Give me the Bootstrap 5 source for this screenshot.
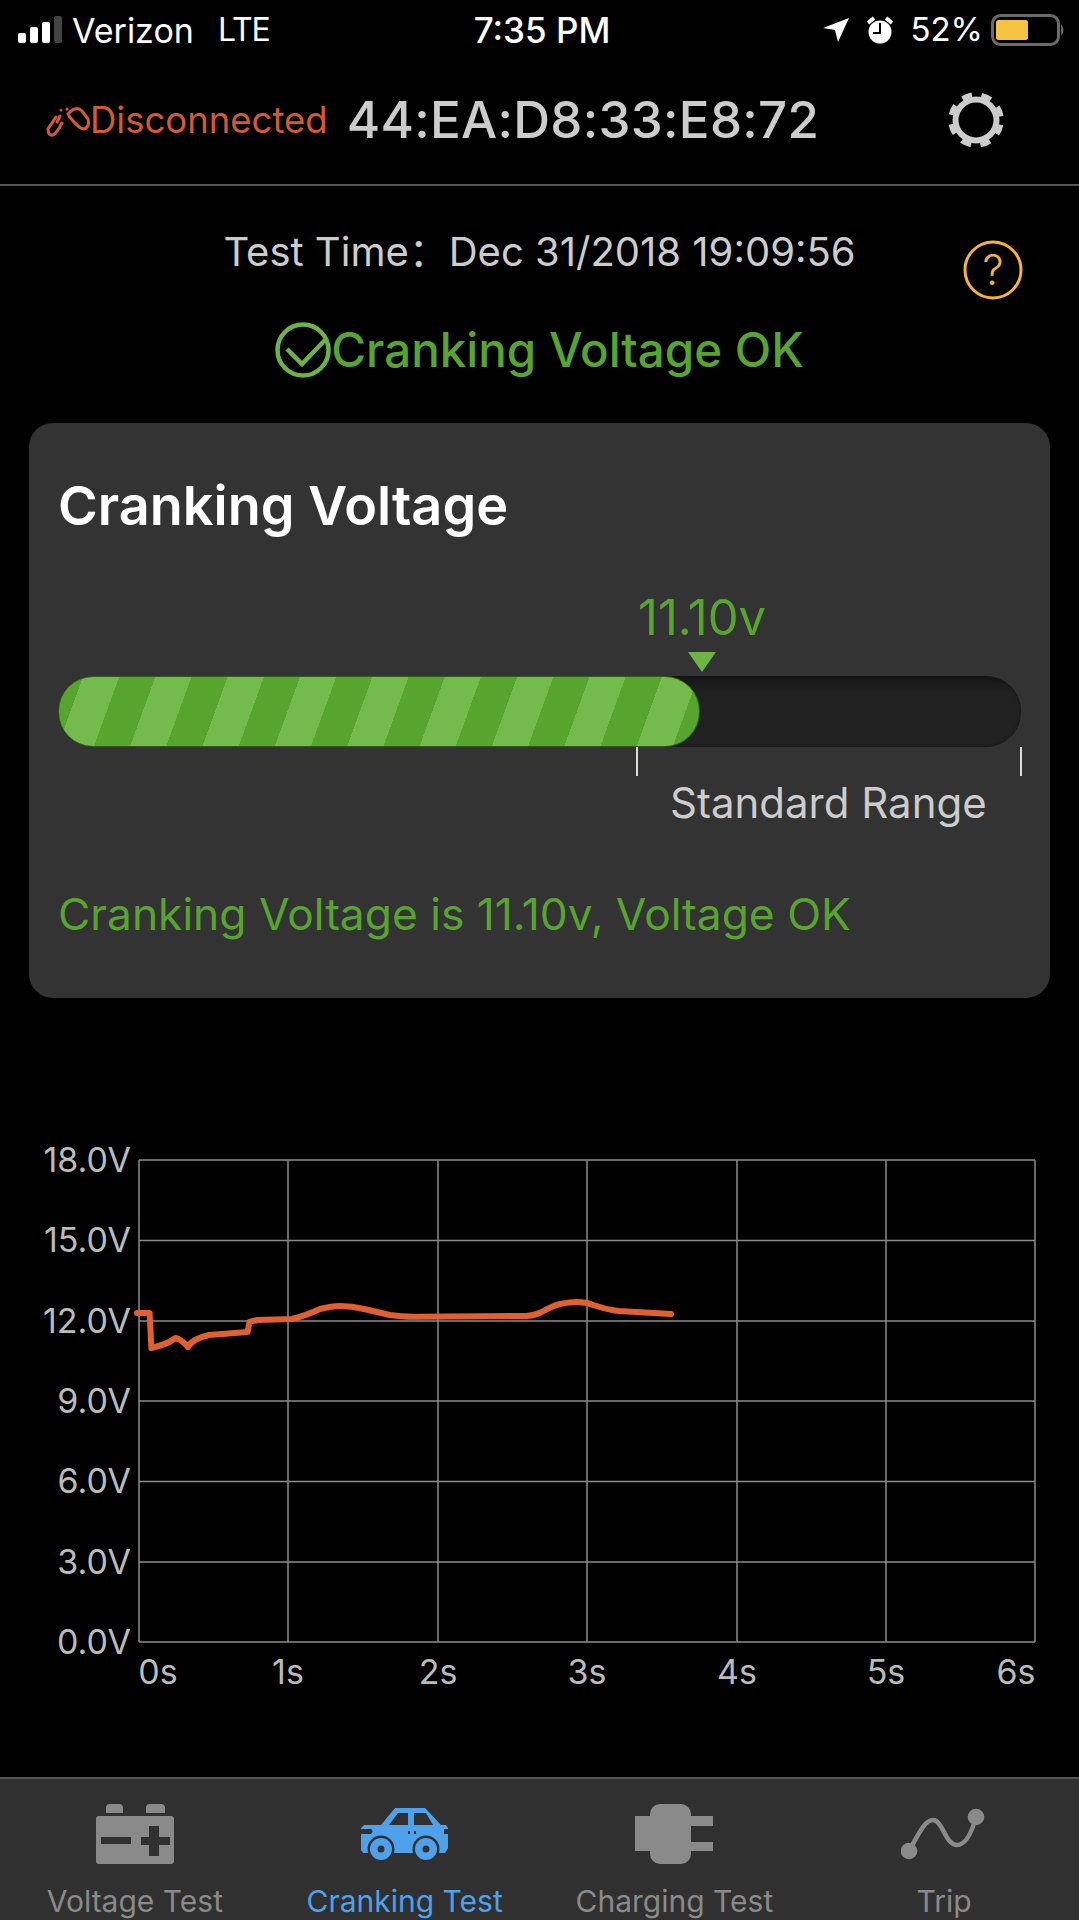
<!DOCTYPE html>
<html lang="en">
<head>
  <meta charset="UTF-8" />
  <title>Cranking Test</title>
  <link href="https://cdn.jsdelivr.net/npm/bootstrap@5.3.3/dist/css/bootstrap.min.css" rel="stylesheet" />
  <style>
    html, body { height: 100%; }
    body { background: #000; font-family: Inter, Roboto, "Noto Sans CJK SC", "Liberation Sans", sans-serif; overflow: hidden; }
    .phone { width: 1079px; height: 1920px; }
    .status-bar { height: 60px; padding: 0 13px 0 18px; color: #fff; font-size: 34px; }
    .status-side { flex: 1 1 0; }
    .status-lte { font-size: 32px; letter-spacing: -1px; }
    .status-time { font-weight: 500; font-size: 35px; }
    .status-pct { font-size: 33px; }
    .conn-bar { height: 126px; padding: 0 0 4px 46px; border-bottom: 2px solid #555; }
    .conn-text { color: #d35a33; font-size: 36.500px; }
    .mac-text { color: #ccc; font-size: 51px; font-weight: 500; margin-left: 19px; letter-spacing: .3px; }
    .gear-icon { margin-left: auto; margin-right: 73px; }
    .test-row { padding: 0 56px; margin-top: 42px; }
    .help-spot { width: 60px; margin-top: 12px; }
    .test-time { color: #ccc; font-size: 40px; line-height: 48px; white-space: nowrap; }
    .result-line { color: #57a42e; font-size: 47.500px; font-weight: 500; height: 60px; margin-top: 20px; }
    .volt-card { background: #333; border-radius: 24px; margin: 43px 29px 0; height: 575px; padding: 0 29px; }
    .volt-title { color: #fff; font-size: 54px; font-weight: 600; padding-top: 50px; line-height: 66px; margin: 0; }
    .volt-value { color: #57a42e; font-size: 49px; line-height: 50px; margin-top: 54px; padding-left: 580px; width: 860px; white-space: nowrap; }
    .volt-arrow { width: 0; height: 0; border-left: 14px solid transparent; border-right: 14px solid transparent; border-top: 20px solid #6cb543; margin: 9px 0 4px 630px; }
    .volt-track { height: 71px; border-radius: 35px; background: linear-gradient(#161616, #212121 25%); box-shadow: inset 0 0 3px #111; }
    .volt-fill { width: 66.7%; height: 100%; border-radius: 35px; border: 1px solid #2f5f18; background: repeating-linear-gradient(110deg, #57a42e 0 22.500px, #74ba4c 22.500px 56.500px, #57a42e 56.500px 68px); }
    .range-ticks { height: 29px; margin-left: 578px; border-left: 2px solid #ddd; border-right: 2px solid #ddd; margin-right: -1px; }
    .range-label { color: #ccc; font-size: 42px; line-height: 54px; margin-left: 612px; white-space: nowrap; }
    .volt-note { color: #57a42e; font-size: 44.300px; line-height: 50px; margin-top: 59px; white-space: nowrap; }
    .chart-svg { display: block; flex: none; }
    .chart-svg text { fill: #bbb; font-size: 34px; font-family: Inter, Roboto, sans-serif; }
    .tab-bar { background: #303030; height: 143px; border-top: 2px solid #555; }
    .tab-item { color: #8a8a8a; font-size: 30px; line-height: 36px; }
    .tab-item.active-tab { color: #4ea1ea; }
    .tab-pic { height: 104px; padding-top: 25px; }
  </style>
</head>
<body>
<div class="phone d-flex flex-column">

  <div class="status-bar d-flex align-items-center">
    <div class="status-side d-flex align-items-center">
      <svg width="46" height="28" viewBox="0 0 46 28" class="me-2"><g fill="#fff"><rect x="0" y="17" width="8" height="10" rx="2"/><rect x="12" y="11" width="8" height="16" rx="2"/><rect x="24" y="6" width="8" height="21" rx="2"/></g><rect x="36" y="0" width="8" height="27" rx="2" fill="#444"/></svg>
      <span>Verizon</span><span class="status-lte ms-4">LTE</span>
    </div>
    <div class="status-time">7:35 PM</div>
    <div class="status-side d-flex align-items-center justify-content-end">
      <svg width="27" height="26" viewBox="0 0 27 26" class="me-3"><path d="M26 1 L0 11 L12 13 L15 25 Z" fill="#fff"/></svg>
      <svg width="28" height="30" viewBox="0 0 28 30" class="me-3"><circle cx="14" cy="17" r="11.500" fill="#fff"/><path d="M14 8v10h-7" fill="none" stroke="#000" stroke-width="2"/><path d="M2 8 L8 3 M26 8 L20 3" stroke="#fff" stroke-width="4"/></svg>
      <span class="status-pct">52%</span>
      <svg width="75" height="32" viewBox="0 0 75 32" class="ms-2"><rect x="1.500" y="1.500" width="66" height="29" rx="8" fill="none" stroke="#6a6a6a" stroke-width="3"/><rect x="5" y="6" width="32" height="20" rx="2.500" fill="#f5c242"/><path d="M70 10 q5 6 0 12z" fill="#6a6a6a"/></svg>
    </div>
  </div>

  <div class="conn-bar d-flex align-items-center">
    <svg width="44" height="34" viewBox="0 0 44 34"><g fill="none" stroke="#d35a33" stroke-width="3" stroke-linecap="round"><path d="M10 14 L2 26 Q2 33 7 32 Q11 30 16 20"/><path d="M22 11 Q30 2 36 8 L42 16 Q44 24 38 26 Q33 26 23 13"/><path d="M15 7v.1M21 6v.1M14 13l-3 6"/></g></svg>
    <span class="conn-text">Disconnected</span>
    <span class="mac-text">44:EA:D8:33:E8:72</span>
    <svg class="gear-icon" width="60" height="60" viewBox="0 0 60 60"><circle cx="30" cy="30" r="20.500" fill="none" stroke="#ccc" stroke-width="6"/><circle cx="30" cy="30" r="25" fill="none" stroke="#ccc" stroke-width="5.500" stroke-dasharray="10 9.635" stroke-dashoffset="-4.800"/></svg>
  </div>

  <div class="test-row d-flex align-items-start">
    <div class="help-spot"></div>
    <div class="test-time flex-grow-1 text-center">Test Time：Dec 31/2018 19:09:56</div>
    <div class="help-spot">
      <svg width="60" height="60" viewBox="0 0 60 60"><circle cx="30" cy="30" r="28" fill="none" stroke="#f3b33e" stroke-width="3"/><text x="30" y="45" text-anchor="middle" fill="#f3b33e" font-size="42" font-weight="300" font-family="Inter, sans-serif">?</text></svg>
    </div>
  </div>

  <div class="result-line d-flex align-items-center justify-content-center">
    <svg width="56" height="56" viewBox="0 0 56 56"><circle cx="28" cy="28" r="25.500" fill="none" stroke="#6cb543" stroke-width="4.500"/><path d="M12 27 L27 42 L50 18" fill="none" stroke="#6cb543" stroke-width="4.500"/></svg>
    <span>Cranking Voltage OK</span>
  </div>

  <div class="volt-card">
    <h2 class="volt-title">Cranking Voltage</h2>
    <div class="volt-value">11.10v</div>
    <div class="volt-arrow"></div>
    <div class="volt-track"><div class="volt-fill"></div></div>
    <div class="range-ticks"></div>
    <div class="range-label">Standard Range</div>
    <div class="volt-note">Cranking Voltage is 11.10v, Voltage OK</div>
  </div>

  <svg class="chart-svg" width="1079" height="779" viewBox="0 998 1079 779">
    <g stroke="#8a8a8a" stroke-width="1.500" fill="none">
      <path d="M139 1160H1035M139 1240.500H1035M139 1321H1035M139 1401H1035M139 1481.500H1035M139 1562H1035M139 1642H1035"/>
      <path d="M139 1160V1642M288 1160V1642M438 1160V1642M587 1160V1642M737 1160V1642M886 1160V1642M1035 1160V1642"/>
    </g>
    <g text-anchor="end">
      <text x="131" y="1172">18.0V</text><text x="131" y="1252">15.0V</text><text x="131" y="1333">12.0V</text><text x="131" y="1413">9.0V</text><text x="131" y="1493">6.0V</text><text x="131" y="1574">3.0V</text><text x="131" y="1654">0.0V</text>
    </g>
    <g text-anchor="middle">
      <text x="158" y="1684">0s</text><text x="288" y="1684">1s</text><text x="438" y="1684">2s</text><text x="587" y="1684">3s</text><text x="737" y="1684">4s</text><text x="886" y="1684">5s</text><text x="1016" y="1684">6s</text>
    </g>
    <path d="M137 1313 L149.600 1313 L151.400 1348 L162 1345 Q169 1343 175.500 1338 Q181 1339 188 1347 Q192 1339 209 1335 L247.600 1332 L249.500 1322 L257 1320 L292 1319 Q305 1316 320 1309 Q332 1306 340 1306 Q352 1306 364 1309 L390 1315 Q405 1317 416 1316.700 L527 1316 Q536 1315 541.700 1312 Q552 1306 560 1304 Q570 1302 577 1302 Q586 1302 593.500 1305 Q608 1310 619 1311 L671 1314" fill="none" stroke="#e0602f" stroke-width="6" stroke-linejoin="round" stroke-linecap="round"/>
  </svg>

  <div class="tab-bar row g-0 text-center">
    <div class="col-3 tab-item">
      <div class="tab-pic"><svg width="78" height="60" viewBox="0 0 78 60"><path d="M10 4a4 4 0 0 1 4-4h9a4 4 0 0 1 4 4v5H10zM50 4a4 4 0 0 1 4-4h11a4 4 0 0 1 4 4v5H50z" fill="#8a8a8a"/><path d="M0 15a3 3 0 0 1 3-3h72a3 3 0 0 1 3 3v42a3 3 0 0 1-3 3H3a3 3 0 0 1-3-3z" fill="#8a8a8a"/><path d="M5 33h30v7H5zM45 33h8V22h10v11h11v8H63v11H53V41H45z" fill="#303030"/></svg></div>
      <div>Voltage Test</div>
    </div>
    <div class="col-3 tab-item active-tab">
      <div class="tab-pic"><svg width="87" height="62" viewBox="0 -4 87 62">
        <path fill="#4ea1ea" fill-rule="evenodd" d="M34 0H64L80 17H85L87 20V40L84 45H2L0 42V20L3 17H20ZM37 5 L28 17H47V5ZM53 5V17H72L65 5Z"/>
        <path d="M0 21H10Q13 23 10 26H0ZM83 21H87V26H83Z" fill="#303030"/>
        <path d="M47 23h2v3h-2zM53 23h2v3h-2z" fill="#303030"/>
        <circle cx="20" cy="41" r="13.500" fill="#303030"/><circle cx="65" cy="41" r="13.500" fill="#303030"/>
        <circle cx="20" cy="41" r="11" fill="#4ea1ea"/><circle cx="65" cy="41" r="11" fill="#4ea1ea"/>
        <circle cx="20" cy="41" r="3.500" fill="#303030"/><circle cx="65" cy="41" r="3.500" fill="#303030"/>
      </svg></div>
      <div>Cranking Test</div>
    </div>
    <div class="col-3 tab-item">
      <div class="tab-pic"><svg width="78" height="60" viewBox="0 0 78 60"><path fill="#8a8a8a" d="M15 12V10A10 10 0 0 1 25 0H46A10 10 0 0 1 56 10V12H78V22H56V38H78V47H56V50A10 10 0 0 1 46 60H25A10 10 0 0 1 15 50V47H0V12Z"/></svg></div>
      <div>Charging Test</div>
    </div>
    <div class="col-3 tab-item">
      <div class="tab-pic"><svg width="86" height="62" viewBox="0 -4 86 62"><path d="M8 43 C18 25 24 12 32 12 C42 12 44 37 56 37 C66 37 72 20 75 9" fill="none" stroke="#8a8a8a" stroke-width="4.500"/><circle cx="8" cy="43" r="8.300" fill="#8a8a8a"/><circle cx="75" cy="9" r="8.300" fill="#8a8a8a"/></svg></div>
      <div>Trip</div>
    </div>
  </div>

</div>
</body>
</html>
